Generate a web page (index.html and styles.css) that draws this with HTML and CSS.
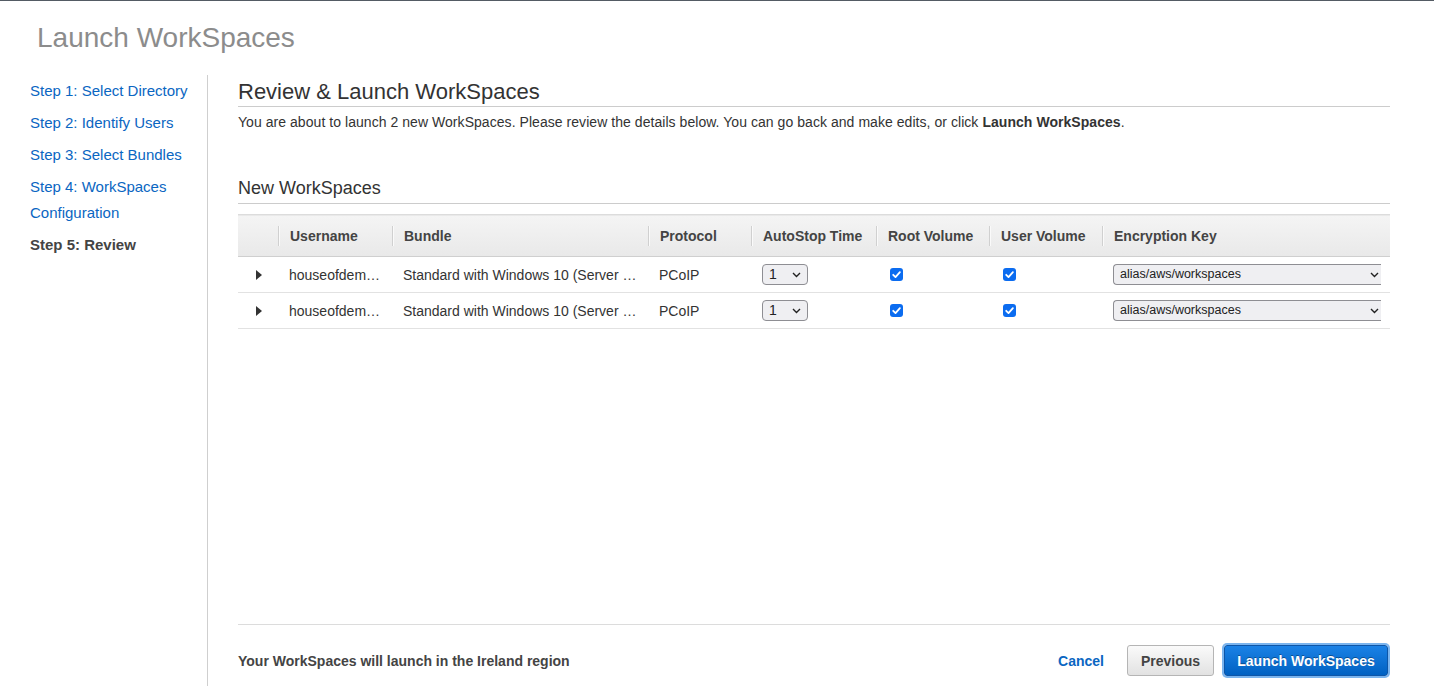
FILE: index.html
```html
<!DOCTYPE html>
<html lang="en">
<head>
<meta charset="utf-8">
<title>Launch WorkSpaces</title>
<link rel="stylesheet" href="styles.css">
</head>
<body>
<div class="page">
  <h1 class="title">Launch WorkSpaces</h1>
  <div class="body">
    <nav class="sidebar">
      <a class="step" href="#">Step 1: Select Directory</a>
      <a class="step" href="#">Step 2: Identify Users</a>
      <a class="step" href="#">Step 3: Select Bundles</a>
      <a class="step" href="#">Step 4: WorkSpaces Configuration</a>
      <span class="step current">Step 5: Review</span>
    </nav>
    <main class="main">
      <div class="content">
        <h2 class="heading">Review &amp; Launch WorkSpaces</h2>
        <p class="intro">You are about to launch 2 new WorkSpaces. Please review the details below. You can go back and make edits, or click <b>Launch WorkSpaces</b>.</p>
        <h3 class="subheading">New WorkSpaces</h3>
        <table class="grid">
          <colgroup>
            <col class="c-exp"><col class="c-user"><col class="c-bundle"><col class="c-proto"><col class="c-auto"><col class="c-root"><col class="c-uvol"><col class="c-key">
          </colgroup>
          <thead>
            <tr>
              <th></th>
              <th class="sep">Username</th>
              <th class="sep">Bundle</th>
              <th class="sep">Protocol</th>
              <th class="sep">AutoStop Time</th>
              <th class="sep">Root Volume</th>
              <th class="sep">User Volume</th>
              <th class="sep">Encryption Key</th>
            </tr>
          </thead>
          <tbody>
            <tr>
              <td class="exp"><span class="tri"></span></td>
              <td>houseofdem…</td>
              <td>Standard with Windows 10 (Server …</td>
              <td>PCoIP</td>
              <td><span class="sel sel-small"><span class="sel-val">1</span><svg class="chev" width="9" height="6" viewBox="0 0 9 6"><path d="M1 1l3.5 3.5L8 1" fill="none" stroke="#222" stroke-width="1.4"/></svg></span></td>
              <td class="chk-cell"><span class="chk"><svg width="13" height="13" viewBox="0 0 13 13"><path d="M3.2 6.8l2.3 2.3 4.4-5" fill="none" stroke="#fff" stroke-width="1.8" stroke-linecap="round" stroke-linejoin="round"/></svg></span></td>
              <td class="chk-cell"><span class="chk"><svg width="13" height="13" viewBox="0 0 13 13"><path d="M3.2 6.8l2.3 2.3 4.4-5" fill="none" stroke="#fff" stroke-width="1.8" stroke-linecap="round" stroke-linejoin="round"/></svg></span></td>
              <td><span class="sel sel-wide"><span class="sel-val">alias/aws/workspaces</span><svg class="chev" width="9" height="6" viewBox="0 0 9 6"><path d="M1 1l3.5 3.5L8 1" fill="none" stroke="#222" stroke-width="1.4"/></svg></span></td>
            </tr>
            <tr>
              <td class="exp"><span class="tri"></span></td>
              <td>houseofdem…</td>
              <td>Standard with Windows 10 (Server …</td>
              <td>PCoIP</td>
              <td><span class="sel sel-small"><span class="sel-val">1</span><svg class="chev" width="9" height="6" viewBox="0 0 9 6"><path d="M1 1l3.5 3.5L8 1" fill="none" stroke="#222" stroke-width="1.4"/></svg></span></td>
              <td class="chk-cell"><span class="chk"><svg width="13" height="13" viewBox="0 0 13 13"><path d="M3.2 6.8l2.3 2.3 4.4-5" fill="none" stroke="#fff" stroke-width="1.8" stroke-linecap="round" stroke-linejoin="round"/></svg></span></td>
              <td class="chk-cell"><span class="chk"><svg width="13" height="13" viewBox="0 0 13 13"><path d="M3.2 6.8l2.3 2.3 4.4-5" fill="none" stroke="#fff" stroke-width="1.8" stroke-linecap="round" stroke-linejoin="round"/></svg></span></td>
              <td><span class="sel sel-wide"><span class="sel-val">alias/aws/workspaces</span><svg class="chev" width="9" height="6" viewBox="0 0 9 6"><path d="M1 1l3.5 3.5L8 1" fill="none" stroke="#222" stroke-width="1.4"/></svg></span></td>
            </tr>
          </tbody>
        </table>
      </div>
      <footer class="footer">
        <span class="region">Your WorkSpaces will launch in the Ireland region</span>
        <div class="actions">
          <a class="cancel" href="#">Cancel</a>
          <button class="btn btn-secondary" type="button">Previous</button>
          <button class="btn btn-primary" type="button">Launch WorkSpaces</button>
        </div>
      </footer>
    </main>
  </div>
</div>
</body>
</html>
```

FILE: styles.css
```css
* { box-sizing: border-box; }
html, body { margin: 0; padding: 0; background: #fff; }
body {
  font-family: "Liberation Sans", Arial, Helvetica, sans-serif;
  color: #333;
}
.page {
  height: 686px;
  display: flex;
  flex-direction: column;
  border-top: 1px solid #545b64;
  overflow: hidden;
}
.title {
  margin: 0;
  padding: 19px 0 0 37px;
  height: 74px;
  font-size: 28px;
  line-height: 36px;
  font-weight: normal;
  color: #8c8c8c;
}
.body {
  flex: 1;
  display: flex;
  min-height: 0;
}
.sidebar {
  width: 208px;
  padding: 3px 0 0 30px;
  border-right: 1px solid #cfcfcf;
  display: flex;
  flex-direction: column;
  gap: 6px;
}
.step {
  font-size: 15px;
  line-height: 26px;
  color: #0a66c2;
  text-decoration: none;
  width: 170px;
}
.step.current {
  color: #444;
  font-weight: bold;
}
.main {
  flex: 1;
  padding: 0 44px 0 30px;
  display: flex;
  flex-direction: column;
}
.content { flex: 1; }
.heading {
  margin: 0;
  padding: 4px 0 1px;
  font-size: 22px;
  line-height: 26px;
  font-weight: normal;
  color: #333;
  border-bottom: 1px solid #ccc;
}
.intro {
  margin: 5px 0 0;
  font-size: 14px;
  line-height: 20px;
  letter-spacing: 0.05px;
  color: #333;
}
.subheading {
  margin: 44px 0 0;
  padding: 0 0 3px;
  font-size: 18px;
  line-height: 24px;
  font-weight: normal;
  color: #333;
  border-bottom: 1px solid #ccc;
}
.grid {
  margin-top: 10px;
  width: 100%;
  table-layout: fixed;
  border-collapse: collapse;
  font-size: 14px;
}
.c-exp { width: 40px; }
.c-user { width: 114px; }
.c-bundle { width: 256px; }
.c-proto { width: 103px; }
.c-auto { width: 125px; }
.c-root { width: 113px; }
.c-uvol { width: 113px; }
.c-key { width: 288px; }
.grid thead tr {
  background: linear-gradient(#f4f4f4, #e9e9e9);
  border-top: 1px solid #dcdcdc;
  border-bottom: 1px solid #cfcfcf;
}
.grid th {
  position: relative;
  height: 42px;
  padding: 0 0 0 12px;
  text-align: left;
  font-weight: bold;
  color: #444;
  white-space: nowrap;
}
.grid th.sep::before {
  content: "";
  position: absolute;
  left: 0;
  top: 11px;
  height: 20px;
  width: 1px;
  background: #d0d0d0;
  box-shadow: 1px 0 0 #fafafa;
}
.grid tbody tr { border-bottom: 1px solid #e2e2e2; }
.grid td {
  height: 36px;
  padding: 0 6px 0 11px;
  color: #333;
  white-space: nowrap;
  vertical-align: middle;
}
.grid td.exp { padding: 0 0 0 18px; }
.tri {
  display: block;
  width: 0;
  height: 0;
  border-top: 5px solid transparent;
  border-bottom: 5px solid transparent;
  border-left: 6px solid #333;
}
.sel {
  position: relative;
  display: flex;
  align-items: center;
  height: 21px;
  border: 1px solid #8e8e93;
  border-radius: 4px;
  background: #efeff2;
  color: #222;
  padding-left: 6px;
}
.sel-small { width: 46px; font-size: 14px; }
.sel-wide { width: 268px; font-size: 12.5px; border-right: none; border-radius: 4px 0 0 4px; }
.sel-val { line-height: 19px; }
.chev {
  position: absolute;
  right: 6px;
  top: 7px;
}
.sel-wide .chev { right: 2px; }
.grid td.chk-cell { padding-left: 14px; }
.chk {
  display: block;
  width: 13px;
  height: 13px;
  border-radius: 3px;
  background: #0b6cf0;
}
.chk svg { display: block; }
.footer {
  border-top: 1px solid #dcdcdc;
  padding: 20px 0 10px;
  display: flex;
  align-items: center;
  justify-content: space-between;
}
.region {
  font-size: 14px;
  font-weight: bold;
  color: #444;
}
.actions {
  display: flex;
  align-items: center;
}
.cancel {
  font-size: 14px;
  font-weight: bold;
  color: #0a66c2;
  text-decoration: none;
  margin-right: 23px;
}
.btn {
  font-family: "Liberation Sans", Arial, Helvetica, sans-serif;
  font-size: 14px;
  font-weight: bold;
  height: 31px;
  border-radius: 3px;
  cursor: pointer;
}
.btn-secondary {
  width: 87px;
  color: #444;
  border: 1px solid #b5b5b5;
  background: linear-gradient(#fafafa, #e2e2e2);
  margin-right: 10px;
}
.btn-primary {
  width: 164px;
  color: #fff;
  border: 1px solid #0d56a8;
  background: linear-gradient(#1b82e6, #0061c2);
  text-shadow: 0 -1px 0 rgba(0, 0, 0, 0.35);
  box-shadow: 0 0 0 2px #7ab4ee;
  margin-right: 2px;
}
```
